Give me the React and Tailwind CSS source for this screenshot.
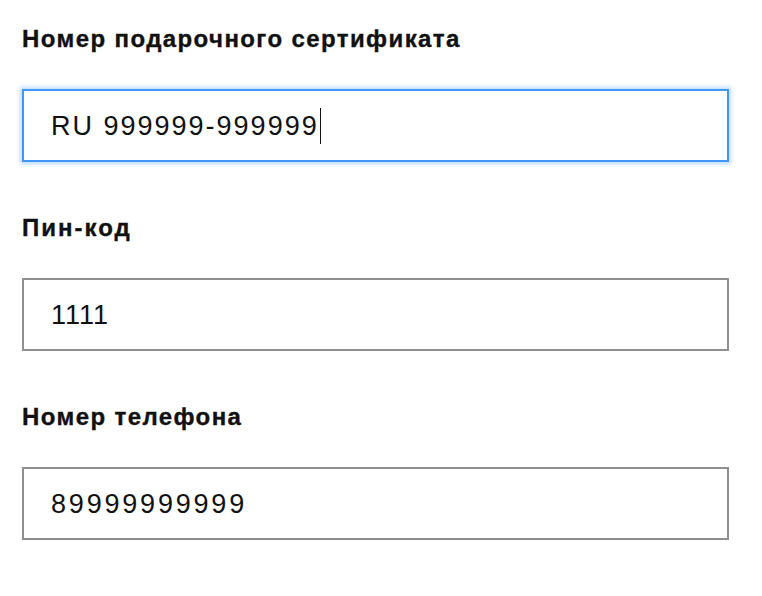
const fields = [
  { label: 'Номер подарочного сертификата', value: 'RU 999999-999999', focused: true, track: 'tracking-[2px]' },
  { label: 'Пин-код', value: '1111', track: 'tracking-[1px]', labelTrack: 'tracking-[2px]' },
  { label: 'Номер телефона', value: '89999999999', track: 'tracking-[2.8px]' },
];

const Field = ({ label, value, focused, track, labelTrack }) => {
  return (
    <div className="flex flex-col">
      <label
        className={
          'text-[24px] leading-[28px] font-bold text-[#111] [-webkit-text-stroke:0.35px_#111] ' +
          (labelTrack || 'tracking-[1.4px]')
        }
      >
        {label}
      </label>
      <div
        className={
          focused
            ? 'mt-[36px] flex h-[73px] w-[707px] items-center border-2 border-[#3f97f6] bg-white pl-[27px] shadow-[0_0_4px_2px_rgba(63,151,246,0.35)]'
            : 'mt-[36px] flex h-[73px] w-[707px] items-center border-2 border-[#8f8f8f] bg-white pl-[27px]'
        }
      >
        <span className={'text-[27px] leading-[32px] text-[#111] ' + track}>{value}</span>
        {focused ? <span className="ml-[1px] h-[36px] w-[1px] bg-[#111]" /> : null}
      </div>
    </div>
  );
};

export default function App() {
  return (
    <div
      className="flex min-h-[596px] w-[762px] flex-col gap-[52px] bg-white pl-[22px] pt-[25px]"
      style={{ fontFamily: '"Liberation Sans", Arial, sans-serif' }}
    >
      {fields.map((f) => (
        <Field key={f.label} {...f} />
      ))}
    </div>
  );
}
